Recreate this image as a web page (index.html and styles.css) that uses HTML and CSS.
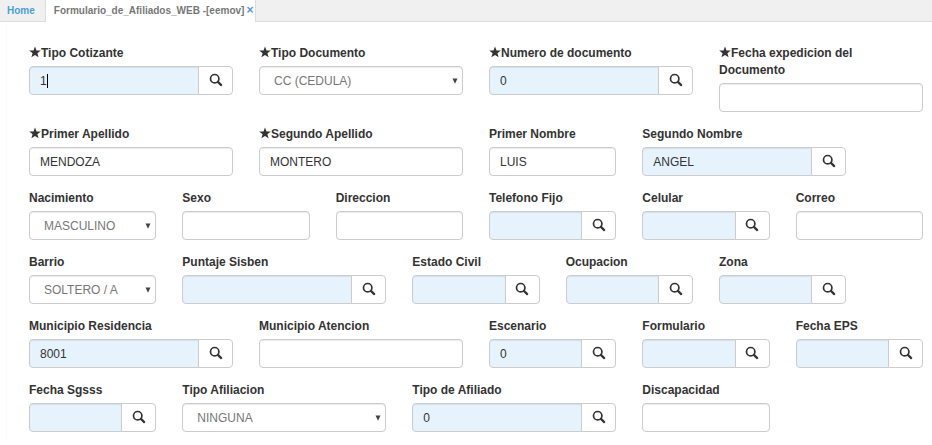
FILE: index.html
```html
<!DOCTYPE html>
<html lang="es">
<head>
<meta charset="utf-8">
<title>Formulario de Afiliados</title>
<link rel="stylesheet" href="styles.css">
</head>
<body>
<svg class="defs" aria-hidden="true">
  <symbol id="search" viewBox="0 0 14 14"><circle cx="5.7" cy="5.7" r="4.2" fill="none" stroke="currentColor" stroke-width="1.7"/><path d="M8.9 8.9L12.2 12.1" fill="none" stroke="currentColor" stroke-width="2.2" stroke-linecap="round"/></symbol>
  <symbol id="star" viewBox="0 0 12 12"><path d="M6 .4L7.5 4.4L11.8 4.5L8.4 7.2L9.6 11.3L6 8.9L2.4 11.3L3.6 7.2L.2 4.5L4.5 4.4Z" fill="currentColor"/></symbol>
  <symbol id="arrow" viewBox="0 0 6 6"><path d="M.5 .5H5.5L3 5.7Z" fill="currentColor"/></symbol>
</svg>
<nav class="tabs">
  <a class="tab" href="#home">Home</a>
  <div class="tab active"><span>Formulario_de_Afiliados_WEB -[eemov]</span><button class="close" type="button" aria-label="Cerrar">×</button></div>
</nav>
<form class="form">
  <div class="row">
    <div class="field wide"><label for="f1"><svg class="star"><use href="#star"/></svg>Tipo Cotizante</label><div class="group"><input id="f1" value="1"><span class="caret"></span><button type="button" aria-label="Buscar"><svg class="search"><use href="#search"/></svg></button></div></div>
    <div class="field wide"><label for="f2"><svg class="star"><use href="#star"/></svg>Tipo Documento</label><div class="select"><select id="f2"><option>CC (CEDULA)</option></select><svg class="arrow"><use href="#arrow"/></svg></div></div>
    <div class="field wide"><label for="f3"><svg class="star"><use href="#star"/></svg>Numero de documento</label><div class="group"><input id="f3" value="0"><button type="button" aria-label="Buscar"><svg class="search"><use href="#search"/></svg></button></div></div>
    <div class="field wide"><label for="f4"><svg class="star"><use href="#star"/></svg>Fecha expedicion del<br>Documento</label><input id="f4"></div>
  </div>
  <div class="row">
    <div class="field wide"><label for="f5"><svg class="star"><use href="#star"/></svg>Primer Apellido</label><input id="f5" value="MENDOZA"></div>
    <div class="field wide"><label for="f6"><svg class="star"><use href="#star"/></svg>Segundo Apellido</label><input id="f6" value="MONTERO"></div>
    <div class="field"><label for="f7">Primer Nombre</label><input id="f7" value="LUIS"></div>
    <div class="field wide"><label for="f8">Segundo Nombre</label><div class="group"><input id="f8" value="ANGEL"><button type="button" aria-label="Buscar"><svg class="search"><use href="#search"/></svg></button></div></div>
  </div>
  <div class="row">
    <div class="field"><label for="f9">Nacimiento</label><div class="select"><select id="f9"><option>MASCULINO</option></select><svg class="arrow"><use href="#arrow"/></svg></div></div>
    <div class="field"><label for="f10">Sexo</label><input id="f10"></div>
    <div class="field"><label for="f11">Direccion</label><input id="f11"></div>
    <div class="field"><label for="f12">Telefono Fijo</label><div class="group"><input id="f12"><button type="button" aria-label="Buscar"><svg class="search"><use href="#search"/></svg></button></div></div>
    <div class="field"><label for="f13">Celular</label><div class="group"><input id="f13"><button type="button" aria-label="Buscar"><svg class="search"><use href="#search"/></svg></button></div></div>
    <div class="field"><label for="f14">Correo</label><input id="f14"></div>
  </div>
  <div class="row">
    <div class="field"><label for="f15">Barrio</label><div class="select"><select id="f15"><option>SOLTERO / A</option></select><svg class="arrow"><use href="#arrow"/></svg></div></div>
    <div class="field wide"><label for="f16">Puntaje Sisben</label><div class="group"><input id="f16"><button type="button" aria-label="Buscar"><svg class="search"><use href="#search"/></svg></button></div></div>
    <div class="field"><label for="f17">Estado Civil</label><div class="group"><input id="f17"><button type="button" aria-label="Buscar"><svg class="search"><use href="#search"/></svg></button></div></div>
    <div class="field"><label for="f18">Ocupacion</label><div class="group"><input id="f18"><button type="button" aria-label="Buscar"><svg class="search"><use href="#search"/></svg></button></div></div>
    <div class="field"><label for="f19">Zona</label><div class="group"><input id="f19"><button type="button" aria-label="Buscar"><svg class="search"><use href="#search"/></svg></button></div></div>
  </div>
  <div class="row">
    <div class="field wide"><label for="f20">Municipio Residencia</label><div class="group"><input id="f20" value="8001"><button type="button" aria-label="Buscar"><svg class="search"><use href="#search"/></svg></button></div></div>
    <div class="field wide"><label for="f21">Municipio Atencion</label><input id="f21"></div>
    <div class="field"><label for="f22">Escenario</label><div class="group"><input id="f22" value="0"><button type="button" aria-label="Buscar"><svg class="search"><use href="#search"/></svg></button></div></div>
    <div class="field"><label for="f23">Formulario</label><div class="group"><input id="f23"><button type="button" aria-label="Buscar"><svg class="search"><use href="#search"/></svg></button></div></div>
    <div class="field"><label for="f24">Fecha EPS</label><div class="group"><input id="f24"><button type="button" aria-label="Buscar"><svg class="search"><use href="#search"/></svg></button></div></div>
  </div>
  <div class="row">
    <div class="field"><label for="f25">Fecha Sgsss</label><div class="group"><input id="f25"><button type="button" aria-label="Buscar"><svg class="search"><use href="#search"/></svg></button></div></div>
    <div class="field wide"><label for="f26">Tipo Afiliacion</label><div class="select"><select id="f26"><option>NINGUNA</option></select><svg class="arrow"><use href="#arrow"/></svg></div></div>
    <div class="field wide"><label for="f27">Tipo de Afiliado</label><div class="group"><input id="f27" value="0"><button type="button" aria-label="Buscar"><svg class="search"><use href="#search"/></svg></button></div></div>
    <div class="field"><label for="f28">Discapacidad</label><input id="f28"></div>
  </div>
</form>
</body>
</html>
```
FILE: styles.css
```css
* { box-sizing: border-box; }
body { margin: 0; background: #fff; color: #333; font-family: "Liberation Sans", Arial, sans-serif; font-size: 12px; }
.defs { position: absolute; width: 0; height: 0; }

.tabs { display: flex; height: 22px; background: #f0f0f0; border-bottom: 1px solid #ddd; font-size: 10px; font-weight: bold; line-height: 21px; }
.tab { padding: 0 10px 0 7px; color: #4a9fd4; text-decoration: none; }
.tab.active { display: flex; gap: 2px; height: 22px; padding: 0 2px 0 8px; color: #777; background: #fff; border: solid #ddd; border-width: 0 1px; }
.close { height: 19px; padding: 0; border: 0; background: none; color: #5a96d8; font: bold 12px/18px "Liberation Sans", Arial, sans-serif; }

.form { display: flex; flex-direction: column; gap: 14px; margin-left: 6px; padding: 23px 9px 12px 22px; border-left: 1px solid #fbfbfb; }
.row { display: grid; grid-template-columns: repeat(12, minmax(0, 1fr)); column-gap: 26px; align-items: start; }
.field { grid-column: span 2; display: flex; flex-direction: column; gap: 4px; }
.field.wide { grid-column: span 3; }
label { font-weight: bold; line-height: 17px; white-space: nowrap; }
.star { width: 12px; height: 12px; vertical-align: -1px; }

input, select { width: 100%; min-width: 0; height: 29px; margin: 0; padding: 0 10px; border: 1px solid #ccc; border-radius: 4px; background: #fff; color: #333; font: 12px "Liberation Sans", Arial, sans-serif; box-shadow: inset 0 1px 1px rgba(0, 0, 0, .075); outline: 0; }
.group { position: relative; display: flex; }
.group input { flex: 1; border-radius: 4px 0 0 4px; background: #e6f3fc; }
.group button { display: flex; align-items: center; justify-content: center; width: 35px; height: 29px; margin-left: -1px; padding: 0 0 2px; border: 1px solid #ccc; border-radius: 0 4px 4px 0; background: #fff; color: #333; }
.search { width: 14px; height: 14px; }
.select { position: relative; }
select { appearance: none; padding: 0 14px; color: #777; }
.arrow { position: absolute; top: 12px; right: 5px; width: 6px; height: 6px; color: #444; }
.caret { position: absolute; top: 8px; left: 18px; width: 1px; height: 14px; background: #000; }
```
